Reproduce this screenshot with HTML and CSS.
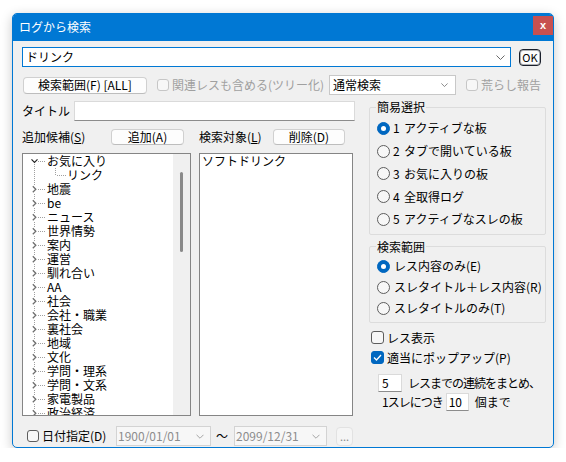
FILE: index.html
```html
<!DOCTYPE html>
<html lang="ja">
<head>
<meta charset="utf-8">
<title>ログから検索</title>
<link rel="stylesheet" href="styles.css">
</head>
<body>
<svg class="defs" width="0" height="0" aria-hidden="true">
  <symbol id="tw-c" viewBox="0 0 24 14">
    <path d="M11.5 0V3M11.5 12V14M15 7.5H23" stroke="#a0a0a0" stroke-dasharray="1 1" fill="none"/>
    <path d="M9.8 4.3L12.8 7.3L9.8 10.3" stroke="#6e6e6e" stroke-width="1.3" fill="none"/>
  </symbol>
  <symbol id="tw-e" viewBox="0 0 24 14">
    <path d="M11.5 10V14M15 7.5H23" stroke="#a0a0a0" stroke-dasharray="1 1" fill="none"/>
    <path d="M8.5 5.3L11.5 8.3L14.5 5.3" stroke="#222" stroke-width="1.2" fill="none"/>
  </symbol>
  <symbol id="tw-k" viewBox="0 0 44 14">
    <path d="M11.5 0V14M32.5 0V8M34 7.5H43" stroke="#a0a0a0" stroke-dasharray="1 1" fill="none"/>
  </symbol>
  <symbol id="chev" viewBox="0 0 9 5">
    <path d="M0.5 0.5L4.5 4.5L8.5 0.5" stroke="currentColor" fill="none"/>
  </symbol>
</svg>

<div class="win">
  <div class="titlebar">
    <span class="title">ログから検索</span>
    <span class="close">x</span>
  </div>
  <div class="body">
    <div class="row1">
      <div class="combo focus"><span>ドリンク</span><svg class="chev" width="9" height="5"><use href="#chev"/></svg></div>
      <button class="btn ok">OK</button>
    </div>

    <div class="row2">
      <button class="btn range">検索範囲(F) [ALL]</button>
      <label class="chk disabled related"><span class="box"></span><span>関連レスも含める(ツリー化)</span></label>
      <div class="select"><span>通常検索</span><svg class="chev small" width="7" height="4" viewBox="0 0 9 5"><use href="#chev"/></svg></div>
      <label class="chk disabled report"><span class="box"></span><span>荒らし報告</span></label>
    </div>

    <div class="main">
      <div class="left">
        <div class="titlerow">
          <span class="lbl">タイトル</span>
          <div class="field titleinput"></div>
        </div>

        <div class="lists">
          <div class="pane pane-l">
            <div class="pane-head">
              <span>追加候補(<u>S</u>)</span>
              <button class="btn add">追加(A)</button>
            </div>
            <div class="listbox tree">
              <div class="tree-items">
                <div class="ti"><svg width="24" height="14"><use href="#tw-e"/></svg><span>お気に入り</span></div>
                <div class="ti"><svg width="44" height="14"><use href="#tw-k"/></svg><span>リンク</span></div>
                <div class="ti"><svg width="24" height="14"><use href="#tw-c"/></svg><span>地震</span></div>
                <div class="ti"><svg width="24" height="14"><use href="#tw-c"/></svg><span>be</span></div>
                <div class="ti"><svg width="24" height="14"><use href="#tw-c"/></svg><span>ニュース</span></div>
                <div class="ti"><svg width="24" height="14"><use href="#tw-c"/></svg><span>世界情勢</span></div>
                <div class="ti"><svg width="24" height="14"><use href="#tw-c"/></svg><span>案内</span></div>
                <div class="ti"><svg width="24" height="14"><use href="#tw-c"/></svg><span>運営</span></div>
                <div class="ti"><svg width="24" height="14"><use href="#tw-c"/></svg><span>馴れ合い</span></div>
                <div class="ti"><svg width="24" height="14"><use href="#tw-c"/></svg><span>AA</span></div>
                <div class="ti"><svg width="24" height="14"><use href="#tw-c"/></svg><span>社会</span></div>
                <div class="ti"><svg width="24" height="14"><use href="#tw-c"/></svg><span>会社・職業</span></div>
                <div class="ti"><svg width="24" height="14"><use href="#tw-c"/></svg><span>裏社会</span></div>
                <div class="ti"><svg width="24" height="14"><use href="#tw-c"/></svg><span>地域</span></div>
                <div class="ti"><svg width="24" height="14"><use href="#tw-c"/></svg><span>文化</span></div>
                <div class="ti"><svg width="24" height="14"><use href="#tw-c"/></svg><span>学問・理系</span></div>
                <div class="ti"><svg width="24" height="14"><use href="#tw-c"/></svg><span>学問・文系</span></div>
                <div class="ti"><svg width="24" height="14"><use href="#tw-c"/></svg><span>家電製品</span></div>
                <div class="ti"><svg width="24" height="14"><use href="#tw-c"/></svg><span>政治経済</span></div>
              </div>
              <div class="scroll"><div class="thumb"></div></div>
            </div>
          </div>
          <div class="pane pane-r">
            <div class="pane-head">
              <span>検索対象(<u>L</u>)</span>
              <button class="btn del">削除(D)</button>
            </div>
            <div class="listbox targets">
              <div class="li">ソフトドリンク</div>
            </div>
          </div>
        </div>

        <div class="daterow">
          <label class="chk datechk"><span class="box"></span><span>日付指定(D)</span></label>
          <div class="dcombo d1"><span>1900/01/01</span><svg class="chev" width="8" height="5" viewBox="0 0 9 5"><use href="#chev"/></svg></div>
          <span class="tilde">〜</span>
          <div class="dcombo d2"><span>2099/12/31</span><svg class="chev" width="8" height="5" viewBox="0 0 9 5"><use href="#chev"/></svg></div>
          <button class="btn dots">...</button>
        </div>
      </div>

      <div class="right">
        <fieldset class="grp g1">
          <legend>簡易選択</legend>
          <div class="radio-row"><span class="radio on"></span><span class="rl"><span class="n">1</span>アクティブな板</span></div>
          <div class="radio-row"><span class="radio"></span><span class="rl"><span class="n">2</span>タブで開いている板</span></div>
          <div class="radio-row"><span class="radio"></span><span class="rl"><span class="n">3</span>お気に入りの板</span></div>
          <div class="radio-row"><span class="radio"></span><span class="rl"><span class="n">4</span>全取得ログ</span></div>
          <div class="radio-row"><span class="radio"></span><span class="rl"><span class="n">5</span>アクティブなスレの板</span></div>
        </fieldset>
        <fieldset class="grp g2">
          <legend>検索範囲</legend>
          <div class="radio-row"><span class="radio on"></span><span class="rl2">レス内容のみ(E)</span></div>
          <div class="radio-row"><span class="radio"></span><span class="rl2">スレタイトル＋レス内容(R)</span></div>
          <div class="radio-row"><span class="radio"></span><span class="rl2">スレタイトルのみ(T)</span></div>
        </fieldset>

        <label class="chk opt first"><span class="box"></span><span>レス表示</span></label>
        <label class="chk opt"><span class="box on"><svg width="9" height="7" viewBox="0 0 9 7"><path d="M1 3.5L3.5 6L8 1" stroke="#fff" stroke-width="1.3" fill="none"/></svg></span><span>適当にポップアップ(P)</span></label>

        <div class="numrow r5">
          <div class="field num">5</div>
          <span class="tight">レスまでの連続をまとめ、</span>
        </div>
        <div class="numrow r10">
          <span class="tight">1スレにつき</span>
          <div class="field num n10">10</div>
          <span>個まで</span>
        </div>
      </div>
    </div>
  </div>
</div>
</body>
</html>
```

FILE: styles.css
```css
* { box-sizing: border-box; }

body {
  margin: 0;
  background: #ffffff;
  font-family: "Noto Sans CJK JP", "Noto Sans", sans-serif;
  font-size: 12px;
  line-height: 14px;
  color: #000;
}

.defs { display: block; width: 0; height: 0; overflow: hidden; }

button { font: inherit; color: inherit; margin: 0; }

.win {
  margin: 13px 0 0 12px;
  width: 542px;
  border: 1px solid #0078d4;
  border-radius: 5px;
  background: #f0f0f0;
  box-shadow: 0 3px 12px rgba(0, 0, 0, 0.22);
  overflow: hidden;
}

.titlebar {
  height: 27px;
  background: #0078d4;
  display: flex;
  align-items: flex-start;
  justify-content: space-between;
}
.title {
  color: #fff;
  line-height: 26px;
  margin-left: 6px;
}
.close {
  width: 20px;
  height: 19px;
  margin-top: 2px;
  background: #c75050;
  color: #fff;
  font: bold 11px "Liberation Sans", sans-serif;
  display: flex;
  align-items: center;
  justify-content: center;
  padding-bottom: 2px;
}

.body { padding: 0 7px 1px 9px; }

/* generic controls */
.btn {
  border: 1px solid #d0d0d0;
  border-bottom-color: #bdbdbd;
  background: #fdfdfd;
  border-radius: 4px;
  padding: 0;
  display: flex;
  align-items: center;
  justify-content: center;
  line-height: 14px;
}
.field {
  background: #fff;
  border: 1px solid #dadada;
  border-bottom-color: #8c8c8c;
}
.chev { color: #6a6a6a; flex: none; }

.chk { display: flex; align-items: center; }
.chk .box {
  width: 13px;
  height: 13px;
  border: 1px solid #5d5d5d;
  border-radius: 3px;
  background: #f7f7f7;
  flex: none;
  display: flex;
  align-items: center;
  justify-content: center;
}
.chk .box.on { background: #0067c0; border-color: #0067c0; }
.chk.disabled { color: #a0a0a0; }
.chk.disabled .box { border-color: #c6c6c6; background: #f7f7f7; }

/* row 1 */
.row1 {
  display: flex;
  align-items: center;
  margin-top: 6px;
  height: 20px;
}
.combo {
  width: 489px;
  height: 20px;
  background: #fff;
  border: 1px solid #0078d4;
  display: flex;
  align-items: center;
  justify-content: space-between;
  padding: 0 5px 0 3px;
}
.ok {
  width: 22px;
  height: 17px;
  margin-left: 8px;
  border: 1px solid #1a1f2b;
  border-radius: 4px;
  box-shadow: inset 0 0 0 1px rgba(26, 31, 43, 0.35);
  background: #fdfdfd;
  font-size: 11px;
}

/* row 2 */
.row2 {
  display: flex;
  align-items: center;
  margin-top: 8px;
  height: 20px;
}
.range { width: 124px; height: 17px; margin-left: 1px; }
.related { width: 172px; margin-left: 10px; }
.related .box, .report .box { width: 12px; height: 12px; margin-right: 3px; }
.select {
  width: 127px;
  height: 20px;
  background: #fff;
  border: 1px solid #c8c8c8;
  display: flex;
  align-items: center;
  justify-content: space-between;
  padding: 0 7px 0 3px;
}
.report { margin-left: 10px; }

/* main */
.main {
  display: flex;
  gap: 13px;
  margin-top: 5px;
}
.left { width: 334px; }
.right { width: 177px; }

.titlerow {
  display: flex;
  align-items: center;
  height: 20px;
  margin-top: 1px;
}
.titlerow .lbl { width: 52px; }
.titleinput { width: 281px; height: 20px; }

.lists { display: flex; gap: 8px; margin-top: 8px; }
.pane-l { width: 169px; }
.pane-r { width: 154px; }
.pane-head { display: flex; align-items: center; height: 16px; }
.pane-head .btn { margin-left: auto; height: 16px; }
.add { width: 73px; margin-right: 7px; }
.del { width: 72px; margin-right: 8px; }

.listbox {
  margin-top: 8px;
  height: 263px;
  border: 1px solid #858585;
  background: #fff;
}
.tree { display: flex; }
.tree-items { flex: 1; overflow: hidden; }
.ti { display: flex; align-items: center; height: 14px; white-space: nowrap; }
.ti svg { flex: none; display: block; }
.scroll {
  width: 17px;
  background: #f0f0f0;
  display: flex;
  justify-content: center;
  padding-top: 18px;
}
.thumb {
  width: 3px;
  height: 80px;
  border-radius: 2px;
  background: #8a8a8a;
}
.targets { padding-left: 2px; }
.li { height: 14px; }

/* date row */
.daterow {
  display: flex;
  align-items: center;
  height: 20px;
  margin-top: 10px;
}
.datechk { width: 89px; margin-left: 5px; }
.datechk .box { width: 12px; height: 12px; margin-right: 3px; }
.dcombo {
  height: 20px;
  border: 1px solid #d3d3d3;
  background: #f7f7f7;
  color: #8d8d8d;
  display: flex;
  align-items: center;
  justify-content: space-between;
  padding: 0 6px 0 1px;
}
.dcombo .chev { color: #9a9a9a; }
.d1 { width: 95px; }
.d2 { width: 93px; }
.tilde { margin: 0 6px 0 5px; }
.dots {
  width: 17px;
  height: 19px;
  margin-left: 9px;
  border-color: #e2e2e2;
  background: #f5f5f5;
  color: #8a8a8a;
  font-size: 11px;
}

/* right column */
.grp {
  margin: 0;
  min-width: 0;
  border: 1px solid #dcdcdc;
  border-radius: 2px;
}
.grp legend {
  padding: 0 1px;
  margin-left: -1px;
  line-height: 14px;
}
.g1 { padding: 3px 7px 3px 7px; }
.g2 { padding: 2px 7px 3px 7px; margin-top: 5px; }

.radio-row { display: flex; align-items: center; }
.g1 .radio-row { height: 22.75px; }
.g2 .radio-row { height: 21px; }
.radio {
  width: 13px;
  height: 13px;
  border-radius: 50%;
  border: 1px solid #5d5d5d;
  background: #f7f7f7;
  flex: none;
  display: flex;
  align-items: center;
  justify-content: center;
}
.radio.on { background: #0067c0; border-color: #0067c0; }
.radio.on::after {
  content: "";
  width: 5px;
  height: 5px;
  border-radius: 50%;
  background: #fff;
}
.rl { margin-left: 3px; white-space: nowrap; }
.rl .n { display: inline-block; width: 11px; }
.rl2 { margin-left: 4px; white-space: nowrap; }

.opt { height: 20px; margin-left: 2px; }
.opt.first { margin-top: 5px; }
.opt .box { margin-right: 3px; }

.numrow { display: flex; align-items: center; height: 18px; white-space: nowrap; }
.r5 { margin-top: 6px; margin-left: 9px; }
.r10 { margin-top: 1px; margin-left: 13px; }
.num {
  width: 24px;
  height: 18px;
  padding-left: 3px;
  line-height: 16px;
}
.r5 .num { margin-right: 6px; }
.n10 { width: 23px; margin: 0 6px 0 3px; padding-left: 2px; }
.tight { letter-spacing: -1px; }
```
